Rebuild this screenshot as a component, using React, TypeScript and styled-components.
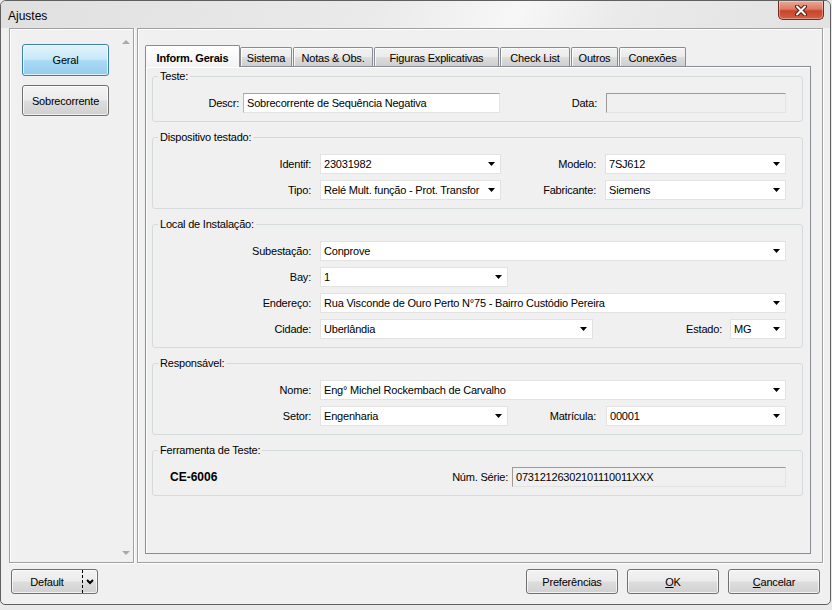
import React from "react";
import styled, { createGlobalStyle } from "styled-components";

const GlobalStyle = createGlobalStyle`
  html, body {
    margin: 0;
    padding: 0;
    background: #e9e9e9;
  }
  body {
    font-family: "Liberation Sans", Arial, sans-serif;
    font-size: 11px;
    letter-spacing: -0.2px;
    color: #000;
  }
`;

const Window = styled.div`
  box-sizing: border-box;
  width: 831px;
  height: 605px;
  border: 1px solid #5f5f5f;
  border-radius: 6px 6px 5px 5px;
  background: #f0f0f0;
  display: flex;
  flex-direction: column;
  overflow: hidden;
`;

const TitleBar = styled.div`
  height: 27px;
  flex-shrink: 0;
  display: flex;
  justify-content: space-between;
  align-items: flex-start;
  padding-left: 7px;
  background: linear-gradient(115deg, #e0e0e0 0%, #eaeaea 45%, #f7f7f7 62%, #eaeaea 74%, #e2e2e2 100%);
`;

const Title = styled.span`
  font-size: 12px;
  line-height: 14px;
  letter-spacing: 0;
  padding-top: 8px;
`;

const CloseButton = styled.div`
  box-sizing: border-box;
  width: 46px;
  height: 19px;
  margin-right: 6px;
  border: 1px solid #6b2d23;
  border-top: none;
  border-radius: 0 0 5px 5px;
  background: linear-gradient(#eaa898 0%, #dc7a63 45%, #c8442b 55%, #d45f44 100%);
  box-shadow: inset 0 0 0 1px rgba(255, 255, 255, 0.35);
  display: flex;
  align-items: center;
  justify-content: center;
`;

const Client = styled.div`
  display: flex;
  flex-direction: column;
  padding: 0 6px 0 8px;
`;

const Main = styled.div`
  display: grid;
  grid-template-columns: 125px 686px;
  column-gap: 3px;
  height: 535px;
`;

const Panel = styled.div`
  box-sizing: border-box;
  border: 1px solid #a0a0a0;
  box-shadow: inset 1px 1px 0 #fff, 1px 1px 0 #fff;
  background: #f0f0f0;
`;

const SidePanel = styled(Panel)`
  display: flex;
`;

const ButtonList = styled.div`
  flex: 1;
  display: flex;
  flex-direction: column;
  gap: 9px;
  padding: 15px 0 0 12px;
`;

const ScrollTrack = styled.div`
  width: 15px;
  display: flex;
  flex-direction: column;
  justify-content: space-between;
  align-items: center;
  padding: 11px 0 7px;
`;

const ScrollArrow = styled.span<{ $down?: boolean }>`
  width: 0;
  height: 0;
  border-left: 4px solid transparent;
  border-right: 4px solid transparent;
  ${(p) => (p.$down ? "border-top: 4px solid #a9a9a9;" : "border-bottom: 4px solid #a9a9a9;")}
`;

const WinButton = styled.button<{ $w: number; $h?: number; $active?: boolean }>`
  box-sizing: border-box;
  width: ${(p) => p.$w}px;
  height: ${(p) => p.$h ?? 25}px;
  padding: 0;
  border: 1px solid ${(p) => (p.$active ? "#3c7fb1" : "#707070")};
  border-radius: 3px;
  background: ${(p) =>
    p.$active
      ? "linear-gradient(#e4f4fc 0%, #c8e8f9 48%, #aadaf4 52%, #93cdee 100%)"
      : "linear-gradient(#f3f3f3 0%, #ebebeb 48%, #dddddd 52%, #d0d0d0 100%)"};
  box-shadow: inset 0 0 0 1px rgba(255, 255, 255, 0.7);
  font-family: "Liberation Sans", Arial, sans-serif;
  font-size: 11px;
  letter-spacing: -0.2px;
  color: #000;
  display: flex;
  align-items: center;
  justify-content: center;
`;

const SplitButton = styled(WinButton)`
  justify-content: flex-start;
  align-items: stretch;
`;

const SplitMain = styled.span`
  width: 70px;
  display: flex;
  align-items: center;
  justify-content: center;
`;

const SplitArrow = styled.span`
  flex: 1;
  border-left: 1px dashed #000;
  display: flex;
  align-items: center;
  justify-content: center;
`;

const Footer = styled.div`
  display: flex;
  align-items: center;
  gap: 9px;
  margin-top: 6px;
  padding: 0 4px 0 2px;
`;

const FooterSpacer = styled.div`
  flex: 1;
`;

const Underline = styled.span`
  text-decoration: underline;
`;

const ContentPanel = styled(Panel)`
  display: flex;
  flex-direction: column;
  padding: 16px 11px 8px 7px;
`;

const TabStrip = styled.div`
  display: flex;
  align-items: flex-end;
  gap: 1px;
  height: 21px;
`;

const Tab = styled.div<{ $w: number; $selected?: boolean }>`
  box-sizing: border-box;
  width: ${(p) => p.$w}px;
  height: ${(p) => (p.$selected ? 22 : 19)}px;
  border: 1px solid #898c95;
  border-bottom: none;
  border-radius: 2px 2px 0 0;
  display: flex;
  align-items: center;
  justify-content: center;
  padding-top: ${(p) => (p.$selected ? 2 : 1)}px;
  white-space: nowrap;
  ${(p) =>
    p.$selected
      ? `
    position: relative;
    z-index: 1;
    margin-bottom: -1px;
    margin-right: -1px;
    font-weight: bold;
    background: linear-gradient(#ffffff, #f3f3f3);
  `
      : `
    background: linear-gradient(#f2f2f2 0%, #ebebeb 50%, #dddddd 51%, #cfcfcf 100%);
    box-shadow: inset 1px 1px 0 rgba(255, 255, 255, 0.8);
  `}
`;

const TabPage = styled.div`
  flex: 1;
  border: 1px solid #898c95;
  background: #f0f0f0;
  box-shadow: inset 1px 1px 0 #fff;
  padding: 3px 7px 0 6px;
`;

const Group = styled.fieldset`
  margin: 0 0 9px;
  min-width: 0;
  border: 1px solid #d5dadd;
  border-radius: 3px;
  padding: 10px 16px 8px 7px;
  display: flex;
  flex-direction: column;
  gap: 6px;
`;

const GroupTitle = styled.legend`
  padding: 0 2px;
  margin-left: -2px;
  line-height: 13px;
  color: #000;
`;

const Row = styled.div`
  display: flex;
  align-items: center;
  height: 20px;
`;

const FieldLabel = styled.span<{ $w?: number; $pr?: number }>`
  box-sizing: border-box;
  flex-shrink: 0;
  ${(p) => (p.$w ? `width: ${p.$w}px;` : "")}
  padding-right: ${(p) => p.$pr ?? 9}px;
  text-align: right;
  white-space: nowrap;
`;

const Combo = styled.div<{ $w: number }>`
  box-sizing: border-box;
  flex-shrink: 0;
  width: ${(p) => p.$w}px;
  height: 20px;
  background: #fff;
  border: 1px solid #e2e2e2;
  display: flex;
  align-items: center;
  padding-left: 3px;
`;

const ComboText = styled.span`
  flex: 1;
  overflow: hidden;
  white-space: nowrap;
`;

const DropArrow = styled.span`
  width: 17px;
  flex-shrink: 0;
  display: flex;
  align-items: center;
  justify-content: center;
`;

const TextBox = styled.div<{ $w: number; $disabled?: boolean }>`
  box-sizing: border-box;
  flex-shrink: 0;
  width: ${(p) => p.$w}px;
  height: 20px;
  background: ${(p) => (p.$disabled ? "#f0f0f0" : "#fff")};
  border: 1px solid;
  border-color: ${(p) =>
    p.$disabled ? "#9a9a9a #e3e3e3 #e3e3e3 #9a9a9a" : "#a5a5a5 #e3e3e3 #e3e3e3 #b5b5b5"};
  display: flex;
  align-items: center;
  padding-left: 3px;
  white-space: nowrap;
  overflow: hidden;
`;

const ToolName = styled.span`
  flex: 1;
  padding-left: 10px;
  font-size: 12px;
  font-weight: bold;
  letter-spacing: 0;
`;

const Triangle = () => (
  <svg width="7" height="4" viewBox="0 0 7 4">
    <path d="M0 0h7L3.5 4z" fill="#000" />
  </svg>
);

const ComboBox = ({ w, value }: { w: number; value: string }) => (
  <Combo $w={w}>
    <ComboText>{value}</ComboText>
    <DropArrow>
      <Triangle />
    </DropArrow>
  </Combo>
);

const tabs = [
  { label: "Inform. Gerais", w: 95 },
  { label: "Sistema", w: 52 },
  { label: "Notas & Obs.", w: 80 },
  { label: "Figuras Explicativas", w: 125 },
  { label: "Check List", w: 70 },
  { label: "Outros", w: 47 },
  { label: "Conexões", w: 67 },
];

export default function App() {
  return (
    <>
      <GlobalStyle />
      <Window>
        <TitleBar>
          <Title>Ajustes</Title>
          <CloseButton>
            <svg width="16" height="11" viewBox="0 0 16 11">
              <path d="M4 1.5L12 9.5M12 1.5L4 9.5" stroke="#5a1e16" strokeWidth="4" strokeLinecap="round" />
              <path d="M4 1.5L12 9.5M12 1.5L4 9.5" stroke="#fff" strokeWidth="2" strokeLinecap="round" />
            </svg>
          </CloseButton>
        </TitleBar>
        <Client>
          <Main>
            <SidePanel>
              <ButtonList>
                <WinButton $w={87} $h={32} $active>
                  Geral
                </WinButton>
                <WinButton $w={87} $h={31}>
                  Sobrecorrente
                </WinButton>
              </ButtonList>
              <ScrollTrack>
                <ScrollArrow />
                <ScrollArrow $down />
              </ScrollTrack>
            </SidePanel>
            <ContentPanel>
              <TabStrip>
                {tabs.map((t, i) => (
                  <Tab key={t.label} $w={t.w} $selected={i === 0}>
                    {t.label}
                  </Tab>
                ))}
              </TabStrip>
              <TabPage>
                <Group>
                  <GroupTitle>Teste:</GroupTitle>
                  <Row>
                    <FieldLabel $w={83} $pr={4}>Descr:</FieldLabel>
                    <TextBox $w={257}>Sobrecorrente de Sequência Negativa</TextBox>
                    <FieldLabel $w={106}>Data:</FieldLabel>
                    <TextBox $w={180} $disabled />
                  </Row>
                </Group>
                <Group>
                  <GroupTitle>Dispositivo testado:</GroupTitle>
                  <Row>
                    <FieldLabel $w={160}>Identif:</FieldLabel>
                    <ComboBox w={181} value="23031982" />
                    <FieldLabel $w={104}>Modelo:</FieldLabel>
                    <ComboBox w={181} value="7SJ612" />
                  </Row>
                  <Row>
                    <FieldLabel $w={160}>Tipo:</FieldLabel>
                    <ComboBox w={181} value="Relé Mult. função - Prot. Transfor" />
                    <FieldLabel $w={104}>Fabricante:</FieldLabel>
                    <ComboBox w={181} value="Siemens" />
                  </Row>
                </Group>
                <Group>
                  <GroupTitle>Local de Instalação:</GroupTitle>
                  <Row>
                    <FieldLabel $w={160}>Subestação:</FieldLabel>
                    <ComboBox w={466} value="Conprove" />
                  </Row>
                  <Row>
                    <FieldLabel $w={160}>Bay:</FieldLabel>
                    <ComboBox w={188} value="1" />
                  </Row>
                  <Row>
                    <FieldLabel $w={160}>Endereço:</FieldLabel>
                    <ComboBox w={466} value="Rua Visconde de Ouro Perto N°75 - Bairro Custódio Pereira" />
                  </Row>
                  <Row>
                    <FieldLabel $w={160}>Cidade:</FieldLabel>
                    <ComboBox w={273} value="Uberlândia" />
                    <FieldLabel $w={137} $pr={8}>Estado:</FieldLabel>
                    <ComboBox w={56} value="MG" />
                  </Row>
                </Group>
                <Group>
                  <GroupTitle>Responsável:</GroupTitle>
                  <Row>
                    <FieldLabel $w={160}>Nome:</FieldLabel>
                    <ComboBox w={466} value="Eng° Michel Rockembach de Carvalho" />
                  </Row>
                  <Row>
                    <FieldLabel $w={160}>Setor:</FieldLabel>
                    <ComboBox w={188} value="Engenharia" />
                    <FieldLabel $w={98} $pr={10}>Matrícula:</FieldLabel>
                    <ComboBox w={180} value="00001" />
                  </Row>
                </Group>
                <Group>
                  <GroupTitle>Ferramenta de Teste:</GroupTitle>
                  <Row>
                    <ToolName>CE-6006</ToolName>
                    <FieldLabel $pr={4}>Núm. Série:</FieldLabel>
                    <TextBox $w={274} $disabled>
                      07312126302101110011XXX
                    </TextBox>
                  </Row>
                </Group>
              </TabPage>
            </ContentPanel>
          </Main>
          <Footer>
            <SplitButton $w={87}>
              <SplitMain>Default</SplitMain>
              <SplitArrow>
                <svg width="8" height="6" viewBox="0 0 8 6">
                  <path d="M1 1l3 3 3-3" stroke="#000" strokeWidth="2" fill="none" />
                </svg>
              </SplitArrow>
            </SplitButton>
            <FooterSpacer />
            <WinButton $w={92}>Preferências</WinButton>
            <WinButton $w={92}>
              <Underline>O</Underline>K
            </WinButton>
            <WinButton $w={92}>
              <Underline>C</Underline>ancelar
            </WinButton>
          </Footer>
        </Client>
      </Window>
    </>
  );
}
